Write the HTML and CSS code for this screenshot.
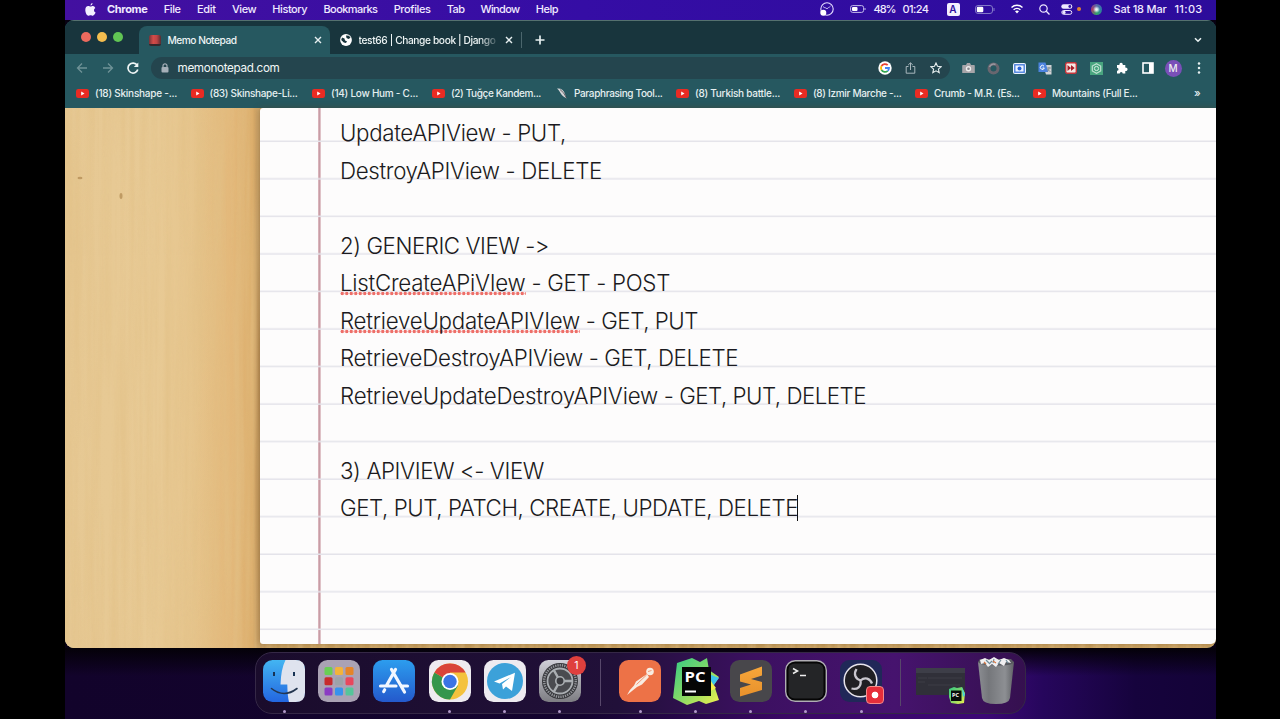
FILE: index.html
```html
<!DOCTYPE html>
<html lang="en">
<head>
<meta charset="utf-8">
<title>Memo Notepad</title>
<link rel="stylesheet" href="styles.css">
</head>
<body>
<svg class="defs" width="0" height="0">
  <defs>
    <symbol id="yt" viewBox="0 0 13 9"><rect width="13" height="9" rx="2.3" fill="#e92b23"/><path d="M5.2 2.6v3.8l3.3-1.9z" fill="#fff"/></symbol>
    <linearGradient id="blue" x1="0" y1="0" x2="0" y2="1"><stop offset="0" stop-color="#43b5f2"/><stop offset="1" stop-color="#2366e0"/></linearGradient>
    <linearGradient id="store" x1="0" y1="0" x2="0" y2="1"><stop offset="0" stop-color="#2c9dee"/><stop offset="1" stop-color="#2459cc"/></linearGradient>
    <linearGradient id="grey" x1="0" y1="0" x2="0" y2="1"><stop offset="0" stop-color="#d0d0d8"/><stop offset="1" stop-color="#7d7d82"/></linearGradient>
    <linearGradient id="bin" x1="0" y1="0" x2="1" y2="0"><stop offset="0" stop-color="#8b8d92"/><stop offset=".3" stop-color="#75777b"/><stop offset=".75" stop-color="#8d8f93"/><stop offset="1" stop-color="#606266"/></linearGradient>
    <linearGradient id="pyc" x1="0" y1="0" x2="1" y2="1"><stop offset="0" stop-color="#35ca85"/><stop offset=".5" stop-color="#83d967"/><stop offset="1" stop-color="#f0f04d"/></linearGradient>
    <linearGradient id="sub" x1="0" y1="0" x2="0" y2="1"><stop offset="0" stop-color="#f6a63a"/><stop offset="1" stop-color="#e8912c"/></linearGradient>
  </defs>
</svg>
<div class="screen">
  <header class="menubar">
    <svg class="apple" viewBox="0 0 11 13"><path d="M7.5 0C6.300.2 5.400 1.300 5.500 2.600 6.700 2.500 7.600 1.300 7.500 0zM8 3C6.900 3 6.400 3.600 5.600 3.600S4.200 3 3.300 3C1.500 3 .3 4.500.3 7c0 2.800 1.700 5.700 3.100 5.700.8 0 1.200-.5 2.200-.5s1.300.5 2.200.5c1.200 0 2.300-1.700 2.800-3.100C8.600 8.700 8.400 5.900 10.300 5 9.800 3.700 8.900 3 8 3z" fill="#f3efff"/></svg>
    <nav class="menus">
      <b class="fit" data-w="40.5">Chrome</b><span class="fit" data-w="17">File</span><span class="fit" data-w="19">Edit</span><span class="fit" data-w="24">View</span><span class="fit" data-w="35">History</span><span class="fit" data-w="54">Bookmarks</span><span class="fit" data-w="37">Profiles</span><span class="fit" data-w="17.5">Tab</span><span class="fit" data-w="39">Window</span><span class="fit" data-w="22.5">Help</span>
    </nav>
    <div class="status">
      <svg class="st-obs" viewBox="0 0 14 14"><circle cx="7" cy="7" r="6.200" fill="none" stroke="#e4dcff" stroke-width="1.100"/><path d="M3 4.500c1.500 2 3 .5 4 2.500 1-2 2-1 3.600-3" fill="none" stroke="#e4dcff" stroke-width=".8"/><circle cx="3.300" cy="10.700" r="3" fill="#fff"/></svg>
      <svg class="st-batt" viewBox="0 0 16 8"><rect x=".6" y=".6" width="13" height="6.800" rx="2" fill="none" stroke="#c4bcec"/><rect x="2" y="2" width="5.500" height="4" rx="1" fill="#fff"/><path d="M15 3v2" stroke="#c4bcec"/></svg>
      <span class="pct fit" data-w="22">48%</span><span class="left fit" data-w="26">01:24</span>
      <i class="lang">A</i>
      <svg class="st-batt2" viewBox="0 0 20 9"><rect x=".5" y=".5" width="17" height="8" rx="2.500" fill="none" stroke="#8378c8"/><rect x="1.800" y="1.800" width="6.500" height="5.400" rx="1.200" fill="#fff"/><path d="M19 3v3" stroke="#8378c8"/></svg>
      <svg class="st-wifi" viewBox="0 0 14 10"><path d="M1.500 3.500a8 8 0 0 1 11 0M3.600 5.800a5 5 0 0 1 6.800 0" fill="none" stroke="#fff" stroke-width="1.400"/><path d="M5 7.300a3 3 0 0 1 4 0L7 9.500z" fill="#fff"/></svg>
      <svg class="st-find" viewBox="0 0 11 11"><circle cx="4.500" cy="4.500" r="3.700" fill="none" stroke="#eee8ff" stroke-width="1.200"/><path d="M7.300 7.300l3.200 3.200" stroke="#eee8ff" stroke-width="1.300"/></svg>
      <svg class="st-cc" viewBox="0 0 12 11"><rect x=".3" y=".2" width="11" height="4.600" rx="2.300" fill="#eee8ff"/><circle cx="8.800" cy="2.500" r="1.400" fill="#3011a3"/><rect x=".8" y="6.500" width="10" height="3.800" rx="1.900" fill="none" stroke="#eee8ff"/><circle cx="3" cy="8.400" r="1.600" fill="#eee8ff"/></svg>
      <i class="mic"></i><i class="siri"></i>
      <span class="fit" data-w="53">Sat 18 Mar</span><span class="clock fit" data-w="28">11:03</span>
    </div>
  </header>

  <main class="window">
    <div class="tabs">
      <div class="lights"><i></i><i></i><i></i></div>
      <div class="tab active">
        <i class="memo"></i><span class="fit" data-w="69">Memo Notepad</span>
        <svg class="x" viewBox="0 0 8 8"><path d="M1 1l6 6M7 1L1 7"/></svg>
      </div>
      <div class="tab second">
        <svg class="globe" viewBox="0 0 12 12"><circle cx="6" cy="6" r="5.900" fill="#fff"/><path d="M2 3.500l2.500 1 .5 2 2 .8-1 1.700-2.200-.5L1.200 6zM6 1.500l3 .3 1.500 2-2 1.200L6.500 4z" fill="#18343c"/></svg>
        <span class="fit fade" data-w="137">test66 | Change book | Django</span>
        <svg class="x" viewBox="0 0 8 8"><path d="M1 1l6 6M7 1L1 7"/></svg>
      </div>
      <svg class="plus" viewBox="0 0 10 10"><path d="M5 .5v9M.5 5h9"/></svg>
      <svg class="down" viewBox="0 0 8 6"><path d="M1 1.200l3 3 3-3"/></svg>
    </div>
    <div class="toolbar">
      <svg class="nav dim" viewBox="0 0 12 12"><path d="M11 6H1.500M6 1.500L1.500 6 6 10.500"/></svg>
      <svg class="nav dim" viewBox="0 0 12 12"><path d="M1 6h9.500M6 1.500L10.500 6 6 10.500"/></svg>
      <svg class="nav" viewBox="0 0 12 12"><path d="M10.200 3.300A5 5 0 1 0 10.800 7.500" stroke-width="1.700"/><path d="M11.300.5v4.500H6.800z" fill="#eef5f5" stroke="none"/></svg>
      <div class="address">
        <svg class="lock" viewBox="0 0 8 10"><rect x=".5" y="4" width="7" height="5.500" rx="1" fill="#a6b0b9"/><path d="M2 4V2.800a2 2 0 0 1 4 0V4" fill="none" stroke="#a6b0b9" stroke-width="1.200"/></svg>
        <span class="fit" data-w="102">memonotepad.com</span>
        <div class="slots">
          <span><svg width="14" height="14" viewBox="0 0 14 14"><circle cx="7" cy="7" r="6.700" fill="#fff"/><g fill="none" stroke-width="1.800"><path d="M9.700 4.200A4 4 0 0 0 3.500 5" stroke="#e94235"/><path d="M3.500 5a4.200 4.200 0 0 0 0 4" stroke="#fabb05"/><path d="M3.500 9A4 4 0 0 0 9.700 9.800" stroke="#34a853"/><path d="M9.700 9.800A4 4 0 0 0 11 7H7" stroke="#4285f4"/></g></svg></span>
          <span><svg width="11" height="12" viewBox="0 0 11 12"><path d="M3.500 4.500H1.200v6.700h8.600V4.500H7.500M5.500 8V1M3.200 3l2.300-2.200L7.800 3" fill="none" stroke="#a9b7bd"/></svg></span>
          <span><svg width="12" height="12" viewBox="0 0 12 12"><path d="M6 1l1.500 3.300 3.600.4-2.700 2.400.8 3.600L6 8.800l-3.200 1.900.8-3.600L.9 4.700l3.600-.4z" fill="none" stroke="#e8eff0" stroke-width="1.100"/></svg></span>
        </div>
      </div>
      <div class="slots ext">
        <span><svg width="13" height="12" viewBox="0 0 13 12"><path d="M1 3h3l1-2h3l1 2h3q.8 0 .8.800V11H.2V3.800Q.2 3 1 3z" fill="#a7a5a9"/><circle cx="6.500" cy="6.800" r="2.700" fill="#eee"/><circle cx="6.500" cy="6.800" r="1.300" fill="#88888c"/></svg></span>
        <span><svg width="13" height="13" viewBox="0 0 13 13"><circle cx="6.500" cy="6.500" r="4.500" fill="none" stroke="#68666f" stroke-width="3"/><path d="M2.500 5a4.500 4.500 0 0 1 6-2.500" fill="none" stroke="#98979f" stroke-width="1.500"/></svg></span>
        <span><svg width="13" height="11" viewBox="0 0 13 11"><rect width="13" height="11" rx="2" fill="#edf4ff"/><rect x="1.800" y="1.800" width="9.400" height="7.400" fill="none" stroke="#4078db" stroke-width="1.300"/><circle cx="6.500" cy="5.500" r="2" fill="#2862d5"/></svg></span>
        <span><svg width="14" height="13" viewBox="0 0 14 13"><path d="M5 3h8.500v9.500H8z" fill="#d2d3d6"/><path d="M.5.500h7l2.800 9.500H.5z" fill="#4c83df"/><path d="M6 4.200A2 2 0 1 0 6.300 6H4.500" fill="none" stroke="#fff"/><path d="M9 6h4M11 5v1c0 2-1 3-2 3.500M9.500 7l3 3" fill="none" stroke="#788" stroke-width=".8"/></svg></span>
        <span><svg width="12" height="12" viewBox="0 0 12 12"><rect x=".7" y=".7" width="10.600" height="10.600" rx="1.500" fill="#f4e9e5" stroke="#c4353b" stroke-width="1.400"/><path d="M2.500 3l3.500 3-3.500 3zM6 3l3.700 3L6 9z" fill="#a71d28"/></svg></span>
        <span><svg width="13" height="13" viewBox="0 0 13 13"><rect width="13" height="13" fill="#49a57f"/><path d="M6.500 1.700l4.200 2.400v4.800l-4.200 2.400-4.200-2.400V4.100z" fill="none" stroke="#c0e2d2" stroke-width="1.200"/><circle cx="6.500" cy="6.500" r="2.100" fill="none" stroke="#d6eee2"/></svg></span>
        <span><svg width="12" height="12" viewBox="0 0 12 12"><path d="M1 3h2.500a1.700 1.700 0 1 1 3.200 0H9.300v2.700a1.700 1.700 0 1 1 0 3.200v2.600H6.700a1.500 1.500 0 0 0-3 0H1V8.800a1.500 1.500 0 0 0 0-3z" fill="#fff"/></svg></span>
        <span><svg width="12" height="12" viewBox="0 0 12 12"><rect x="1" y="1" width="10" height="10" fill="none" stroke="#fff" stroke-width="1.600"/><rect x="7" y="1" width="4" height="10" fill="#fff"/></svg></span>
        <span><i class="avatar">M</i></span>
        <span><svg width="4" height="12" viewBox="0 0 4 12" fill="#e8f0f0"><circle cx="2" cy="1.500" r="1.250"/><circle cx="2" cy="6" r="1.250"/><circle cx="2" cy="10.500" r="1.250"/></svg></span>
      </div>
    </div>
    <div class="bookmarks">
      <div><svg><use href="#yt"/></svg><span class="fit" data-w="82">(18) Skinshape -...</span></div>
      <div><svg><use href="#yt"/></svg><span class="fit" data-w="88">(83) Skinshape-Li...</span></div>
      <div><svg><use href="#yt"/></svg><span class="fit" data-w="87">(14) Low Hum - C...</span></div>
      <div><svg><use href="#yt"/></svg><span class="fit" data-w="90">(2) Tuğçe Kandem...</span></div>
      <div><svg class="quill" viewBox="0 0 13 11"><path d="M2 .5C6 0 9 2 10 6l1.500 4.500-3-2C6 7 5 3 2 .5z" fill="#d4d5d8"/><path d="M5 1.500Q9 4 11.500 10" fill="none" stroke="#45363c" stroke-width=".7"/></svg><span class="fit" data-w="88.500">Paraphrasing Tool...</span></div>
      <div><svg><use href="#yt"/></svg><span class="fit" data-w="85">(8) Turkish battle...</span></div>
      <div><svg><use href="#yt"/></svg><span class="fit" data-w="88.500">(8) Izmir Marche -...</span></div>
      <div><svg><use href="#yt"/></svg><span class="fit" data-w="85.500">Crumb - M.R. (Es...</span></div>
      <div><svg><use href="#yt"/></svg><span class="fit" data-w="85.500">Mountains (Full E...</span></div>
      <b>»</b>
    </div>
    <section class="desk">
      <svg class="wood" width="1151" height="540">
        <filter id="grain" x="0" y="0" width="100%" height="100%"><feTurbulence type="fractalNoise" baseFrequency=".13 .004" numOctaves="3" seed="8"/><feColorMatrix values="0 0 0 0 .76  0 0 0 0 .53  0 0 0 0 .24  1.500 0 0 0 -.48"/></filter>
        <rect width="1151" height="540" filter="url(#grain)"/>
        <g fill="#9c7138" opacity=".65"><ellipse cx="15" cy="70" rx="2.500" ry="1.200"/><ellipse cx="56" cy="88" rx="1.500" ry="3"/></g>
      </svg>
      <article class="paper">
        <svg class="rules" width="956" height="536">
          <defs><pattern id="rule" width="956" height="37.54" patternUnits="userSpaceOnUse" y="-3.5"><path d="M0 37.54H956" stroke="#e4e3ea" stroke-width="2.800"/></pattern></defs>
          <rect width="956" height="536" fill="url(#rule)"/>
        </svg>
        <div class="notes">
          <p><span class="fit" data-w="226">UpdateAPIView - PUT,</span></p>
          <p><span class="fit" data-w="262">DestroyAPIView - DELETE</span></p>
          <p></p>
          <p><span class="fit" data-w="209">2) GENERIC VIEW -&gt;</span></p>
          <p><span><u class="fit" data-w="185.5">ListCreateAPiVIew</u><span class="fit" data-w="144.5"> - GET - POST</span></span></p>
          <p><span><u class="fit" data-w="240">RetrieveUpdateAPIVIew</u><span class="fit" data-w="118"> - GET, PUT</span></span></p>
          <p><span class="fit" data-w="243">RetrieveDestroyAPIView</span><span class="fit" data-w="155"> - GET, DELETE</span></p>
          <p><span class="fit" data-w="318">RetrieveUpdateDestroyAPIView</span><span class="fit" data-w="208"> - GET, PUT, DELETE</span></p>
          <p></p>
          <p><span class="fit" data-w="204">3) APIVIEW &lt;- VIEW</span></p>
          <p><span class="fit" data-w="458">GET, PUT, PATCH, CREATE, UPDATE, DELETE</span><i class="caret"></i></p>
        </div>
      </article>
    </section>
  </main>

  <footer class="desktop">
    <div class="dock">
      <div class="app run"><svg viewBox="0 0 42 42"><rect width="42" height="42" rx="9.500" fill="url(#blue)"/><path d="M22.500 0H32.500Q42 0 42 9.500v23Q42 42 32.500 42H26q-1.500-6-1.700-17.500H17.500Q18 9 22.500 0z" fill="#dfe3ee"/><path d="M11 12v4M31 12v4" stroke="#183354" stroke-width="2"/><path d="M8.500 28.500q12.500 10 25.500 0" fill="none" stroke="#243650" stroke-width="1.600" stroke-linecap="round"/></svg></div>
      <div class="app"><svg viewBox="0 0 42 42"><rect width="42" height="42" rx="9.500" fill="#aaa2b4"/><rect x="6.500" y="7" width="8" height="8" rx="1.500" fill="#69cf55"/><rect x="17" y="7" width="8" height="8" rx="1.500" fill="#f2b33b"/><rect x="27.500" y="7" width="8" height="8" rx="1.500" fill="#e58429"/><rect x="6.500" y="17.300" width="8" height="8" rx="1.500" fill="#c72b2c"/><rect x="17" y="17.300" width="8" height="8" rx="1.500" fill="#9da2a8"/><rect x="27.500" y="17.300" width="8" height="8" rx="1.500" fill="#e8475d"/><rect x="6.500" y="27.600" width="8" height="8" rx="1.500" fill="#8b3cc3"/><rect x="17" y="27.600" width="8" height="8" rx="1.500" fill="#3892ed"/><rect x="27.500" y="27.600" width="8" height="8" rx="1.500" fill="#55c59a"/></svg></div>
      <div class="app"><svg viewBox="0 0 42 42"><rect width="42" height="42" rx="9.500" fill="url(#store)"/><g fill="none" stroke="#f2f7ff" stroke-width="3.200" stroke-linecap="round"><path d="M22.500 9.500L13.500 25.500M18.500 9.500L31.500 32M7.500 26H23M29 26h5.500M11.700 29.800l-1 1.700"/></g></svg></div>
      <div class="app run"><svg viewBox="0 0 42 42"><rect width="42" height="42" rx="9.500" fill="#eeebf0"/><circle cx="21" cy="21.500" r="18" fill="#f4c23d"/><path d="M21 21.500L5.400 12.500A18 18 0 0 0 21 39.500l8-14z" fill="#35964c"/><path d="M21 21.500L5.400 12.500a18 18 0 0 1 31.200 0H21z" fill="#d9443a"/><circle cx="21" cy="21.500" r="8.500" fill="#fff"/><circle cx="21" cy="21.500" r="6.700" fill="#3b74e4"/></svg></div>
      <div class="app run"><svg viewBox="0 0 42 42"><rect width="42" height="42" rx="9.500" fill="#eeebf0"/><circle cx="21" cy="21" r="18" fill="#3ca1d9"/><path d="M10 21.500L31 12.800 28 31l-6-4.500-3 3-1-5.500 9-7-11.500 6.500z" fill="#fff"/></svg></div>
      <div class="app run"><svg viewBox="0 0 42 42"><rect width="42" height="42" rx="9.500" fill="url(#grey)"/><circle cx="21" cy="21" r="18" fill="#36373b"/><circle cx="21" cy="21" r="15.800" fill="none" stroke="#94969b" stroke-width="2.500" stroke-dasharray="1.300 1"/><circle cx="21" cy="21" r="12.500" fill="#4a4b50" stroke="#aaaeb2" stroke-width="1.800"/><path d="M21 21H34M21 21L14.500 9.700M21 21L14.500 32.300" stroke="#aaaeb2" stroke-width="2.400"/><circle cx="21" cy="21" r="4.200" fill="#3a3b40" stroke="#aaaeb2" stroke-width="1.600"/></svg><b class="badge">1</b></div>
      <i class="sep"></i>
      <div class="app run"><svg viewBox="0 0 42 42"><rect width="42" height="42" rx="9.500" fill="#ed7247"/><circle cx="31" cy="11.500" r="3.800" fill="#f8ece2"/><path d="M28 14l2 3-7 7.500-5 2.500-10 8q3-6 7-9.500l2-4z" fill="#f8ece2"/><path d="M17.500 24.500L27.500 15M29 11.500l3.500-1" stroke="#ed7247" fill="none" stroke-width=".7"/></svg></div>
      <div class="app run"><svg class="pc" viewBox="0 0 48 48"><path d="M5 6L20 1l8 4 7-4 2 12 10 7-5 8 5 15-13 4-7-3-12 4L1 41z" fill="url(#pyc)"/><path d="M37 17l10 4-6 8z" fill="#3cc4ee"/><path d="M37 22l7 9-7 4z" fill="#f3ef4d"/><rect x="10" y="10" width="29" height="29" fill="#050606"/><path d="M13 34.500h11" stroke="#fff" stroke-width="2"/><text x="12.500" y="24.500" class="pctext" textLength="21" lengthAdjust="spacingAndGlyphs">PC</text></svg></div>
      <div class="app run"><svg viewBox="0 0 42 42"><rect width="42" height="42" rx="9.500" fill="#48474b"/><path d="M10 14.500L32 6.500v9l-11 3.500L32 22v8L10 36.500v-8.500l11-3.500-11-3z" fill="url(#sub)"/></svg></div>
      <div class="app run"><svg viewBox="0 0 42 42"><rect x=".7" y=".7" width="40.600" height="40.600" rx="9.500" fill="#050505" stroke="#b0aeb4" stroke-width="1.400"/><rect x="3.500" y="3.500" width="35" height="35" rx="6" fill="#242527"/><path d="M8 8.500l4.500 2.500L8 13.500M15 15.500h6" fill="none" stroke="#eee" stroke-width="1.500"/></svg></div>
      <div class="app run"><svg viewBox="0 0 42 42"><rect width="42" height="42" rx="9.500" fill="#202858"/><circle cx="20.500" cy="20.500" r="16.300" fill="#201f24" stroke="#e7e4ec" stroke-width="1.500"/><path d="M20.500 20.500C15 18.500 13.500 14 16.500 9M20.500 20.500C25 16.500 30 18.500 32 23.500M20.500 20.500C21.500 26.500 17.500 30 11.500 28.500" fill="none" stroke="#c9c6cf" stroke-width="2.300"/></svg><i class="rec"></i></div>
      <i class="sep two"></i>
      <svg class="thumb" viewBox="0 0 50 42"><rect x="0" y="7" width="49" height="27" fill="#303039"/><rect y="7" width="49" height="5" fill="#3d3e48"/><path d="M2 17h9M2 21h7M12 17h34M12 24h32" stroke="#3c3c46"/><path d="M33 28l5-2 3 1 5-1 3 6-1 10-6 1-7-1-2-6z" fill="url(#pyc)"/><path d="M46 26l3 8-2 2z" fill="#41d3df"/><rect x="35" y="29.500" width="10.500" height="10.500" fill="#080b0a"/><text x="36" y="35.500" class="pcmini">PC</text></svg>
      <svg class="trash" viewBox="0 0 38 50"><path d="M1 6h36l-4 36q-1 6-14 6T5 42z" fill="url(#bin)"/><path d="M1 6q1 3 18 3.500T37 6L34 3H3z" fill="#595b61"/><path d="M3 4l5-2 4 2 5-3 5 3 5-2 5 2 2 3-5-1-2 4-5-3-3 4-4-3-4 3-3-4-4 1z" fill="#f1f0f2"/><path d="M9 4l3 3M17 3l-1 4M24 4l-3 4M29 4l2 3M12 8l3-3" stroke="#6f8d9c" stroke-width="1.200"/><path d="M16 5l3 2M7 6l2 2" stroke="#d77a48" stroke-width="1.300"/></svg>
    </div>
  </footer>
</div>
<script src="fit.js"></script>
</body>
</html>
```
FILE: styles.css
```css
* { box-sizing: border-box; }
body { margin: 0; background: #000; font-family: Inter, "Noto Sans", sans-serif; overflow: hidden; }
.defs { position: absolute; }
svg { display: block; flex: none; }
.fit { white-space: pre; flex: none; }
.screen { width: 1151px; height: 719px; margin-left: 65px; background: #080112; }

.menubar { height: 20px; display: flex; align-items: center; justify-content: space-between; padding: 0 14px 2px 20px; font-size: 11px; font-weight: 500; color: #f0eaff; background: linear-gradient(90deg, #4310a0, #350da5 45%, #2c0c9b); }
.apple { width: 11px; height: 13px; }
.menus { display: flex; gap: 16.200px; margin: 0 auto 0 11px; }
.menus b { font-weight: 700; }
.status { display: flex; align-items: center; margin-right: -.5px; }
.st-obs { width: 14px; height: 14px; margin-right: 16px; }
.st-batt { width: 16px; height: 8px; margin-right: 8px; }
.left { margin-left: 7px; }
.lang { width: 13px; height: 13px; margin: 0 15px 0 18px; border-radius: 2px; background: #f4f0ff; color: #3010a0; font: 600 10px/13px Inter, sans-serif; text-align: center; }
.st-batt2 { width: 20px; height: 9px; margin-right: 15px; }
.st-wifi { width: 14px; height: 10px; margin-right: 15px; }
.st-find { width: 11px; height: 11px; margin-right: 11px; }
.st-cc { width: 12px; height: 11px; margin-right: 4px; }
.mic { width: 4px; height: 4px; border-radius: 50%; background: #e08331; margin-right: 10px; }
.siri { width: 11px; height: 11px; border-radius: 50%; margin-right: 12px; background: radial-gradient(circle, #e8f4f5 10%, transparent 45%), conic-gradient(#5867a9, #2f7ca6, #32a06a, #a83b68, #5867a9); }
.clock { margin-left: 8px; }

.window { height: 628px; border-radius: 9px; overflow: hidden; background: #265860; }
.tabs { height: 34px; display: flex; align-items: center; background: #18353d; border-top: 1px solid #55716f; padding: 5px 14px 0 16px; color: #edf4f4; font-size: 10.200px; font-weight: 500; }
.lights { display: flex; gap: 6px; margin: -7px 15px 0 0; }
.lights i { width: 10px; height: 10px; border-radius: 50%; background: #ec6a5e; }
.lights i:nth-child(2) { background: #f4be4f; }
.lights i:nth-child(3) { background: #61c554; }
.tab { display: flex; align-items: center; height: 28px; }
.active { width: 191px; background: #265860; border-radius: 8px 8px 0 0; margin-left: 1px; padding: 0 8.500px 0 10px; }
.memo { width: 12px; height: 11px; margin-right: 6.500px; border-radius: 2px; background: linear-gradient(90deg, #74343a, #d44c48 35%, #bf4445 65%, #552c31); border-bottom: 2px solid #36272c; }
.x { width: 8px; height: 8px; margin-left: auto; }
.x path, .plus path, .down path { fill: none; stroke: #e6eff0; stroke-width: 1.400; }
.second { width: 192px; padding: 0 9px 0 10px; background: linear-gradient(#4b666d, #4b666d) right center / 1px 16px no-repeat; }
.globe { width: 12px; height: 12px; margin-right: 6.500px; }
.fade { -webkit-mask-image: linear-gradient(90deg, #000 88%, transparent 103%); }
.plus { width: 10px; height: 10px; margin-left: 12.500px; }
.plus path { stroke-width: 1.700; }
.down { width: 8px; height: 6px; margin-left: auto; }
.down path { stroke-width: 1.600; }

.toolbar { height: 27px; display: flex; align-items: center; padding: 1px 4.500px 0 11px; }
.nav { width: 12px; height: 12px; margin-right: 13.600px; fill: none; stroke: #eef5f5; stroke-width: 1.300; }
.dim { stroke: #6f9297; }
.address { width: 799px; height: 22px; margin-left: -1.800px; border-radius: 11px; background: #24454e; display: flex; align-items: center; padding: 0 1px 0 10.500px; color: #f1f6f6; font-size: 11.700px; }
.lock { width: 8px; height: 10px; margin-right: 8px; }
.address .fit { margin-top: -1px; }
.address .slots { margin-left: auto; }
.slots { display: flex; }
.slots > span { width: 25.600px; display: flex; justify-content: center; align-items: center; }
.ext { margin-left: auto; }
.avatar { width: 17px; height: 17px; border-radius: 50%; background: #7a4fb8; color: #eee; font: 500 10px/17px Inter, sans-serif; text-align: center; }

.bookmarks { height: 27px; display: grid; grid-template-columns: 114.500px 121.500px 120px 123px 121px 118px 121px 118px 161px auto; align-items: center; padding: 0 0 3px 11px; color: #e5eff0; font-size: 10px; font-weight: 500; }
.bookmarks div { display: flex; align-items: center; gap: 6px; }
.bookmarks svg { width: 13px; height: 9px; }
.bookmarks .quill { height: 11px; }
.bookmarks b { font-size: 11px; font-weight: 500; }

.desk { height: 540px; display: grid; padding: 0 0 4px 195px; background: linear-gradient(90deg, #e6c893, #e8ca95 60%, transparent), linear-gradient(90deg, #e5c288 0 11%, #e3b87a 14.500%, #dcae6c 16.300%, #bf965c 17%, #c9a160 18%); background-size: 150px 100%, 100% 100%; background-repeat: no-repeat; }
.desk > * { grid-area: 1 / 1; }
.wood { margin-left: -195px; opacity: .8; }
.paper { position: relative; height: 536px; display: grid; border-radius: 3px 0 5px 3px; box-shadow: -1px 0 6px rgba(95, 61, 22, .4); background: #fdfcfc; }
.paper > * { grid-area: 1 / 1; }
.rules { background: linear-gradient(90deg, transparent 58px, #d9b3ba 58px 59px, #c79da6 59px 60px, #dfc2c7 60px 61px, transparent 61px); }
.notes { padding: 6px 0 0 80px; color: #1b1a20; font-size: 22.300px; font-weight: 330; font-feature-settings: "calt" 0; }
.notes p { height: 37.500px; margin: 0; line-height: 37.500px; white-space: nowrap; display: flex; align-items: center; }
.notes u { display: inline-block; line-height: 27px; text-decoration: none; background: radial-gradient(circle, #ee6f69 1.400px, transparent 2.100px) 0 100% / 4.500px 5px repeat-x; }
.caret { width: 1px; height: 26px; margin-left: -1px; background: #111; }

.desktop { height: 71px; padding: 4px 0 0 190px; background: linear-gradient(#040108, transparent 28px), linear-gradient(90deg, #12032b, #14042f 45%, #3b0865 63%, #3c0875 80%, #26065c 85%, #16033d 93%, #130337); }
.dock { width: 771px; height: 62px; border-radius: 17px; border: 1px solid #352846; display: flex; align-items: flex-start; padding: 7px 0 0 7px; background: linear-gradient(90deg, #1a0c2c, #211039 47%, #3c1061 65%, #46136e 83%, #35104f); }
.app { position: relative; width: 42px; height: 54px; margin-right: 13.200px; }
.app > svg { width: 42px; height: 42px; }
.app .pc { width: 48px; height: 48px; margin: -3px; }
.run::after { content: ""; position: absolute; left: 19.500px; top: 50px; width: 3px; height: 3px; border-radius: 50%; background: #b29acb; }
.badge { position: absolute; left: 28px; top: -4px; width: 19px; height: 19px; border-radius: 50%; background: #df403d; color: #fff; font: 400 10.500px/19px Inter, sans-serif; text-align: center; }
.rec { position: absolute; left: 26px; top: 26px; width: 18px; height: 18px; border-radius: 4px; border: 1px solid #f58a8b; background: radial-gradient(circle, #fff 3px, #e62e3a 3.700px); }
.sep { width: 1px; height: 47px; margin: -1px 18.200px 0 6px; background: #57476a; }
.two { margin: -1px 15px 0 5px; }
.thumb { width: 50px; height: 44px; margin-right: 10.500px; }
.trash { width: 38px; height: 50px; margin-top: -4px; }
.pctext { font: 700 14.500px "Open Sans", sans-serif; fill: #fff; }
.pcmini { font: 700 5.500px "Open Sans", sans-serif; fill: #fff; }
```
FILE: fit.js
```js
// Spread each label evenly so that it fills its measured column width.
document.querySelectorAll('.fit').forEach(function (el) {
  var natural = el.getBoundingClientRect().width;
  var count = el.textContent.length;
  el.style.letterSpacing = (Number(el.dataset.w) - natural) / count + 'px';
});
```
